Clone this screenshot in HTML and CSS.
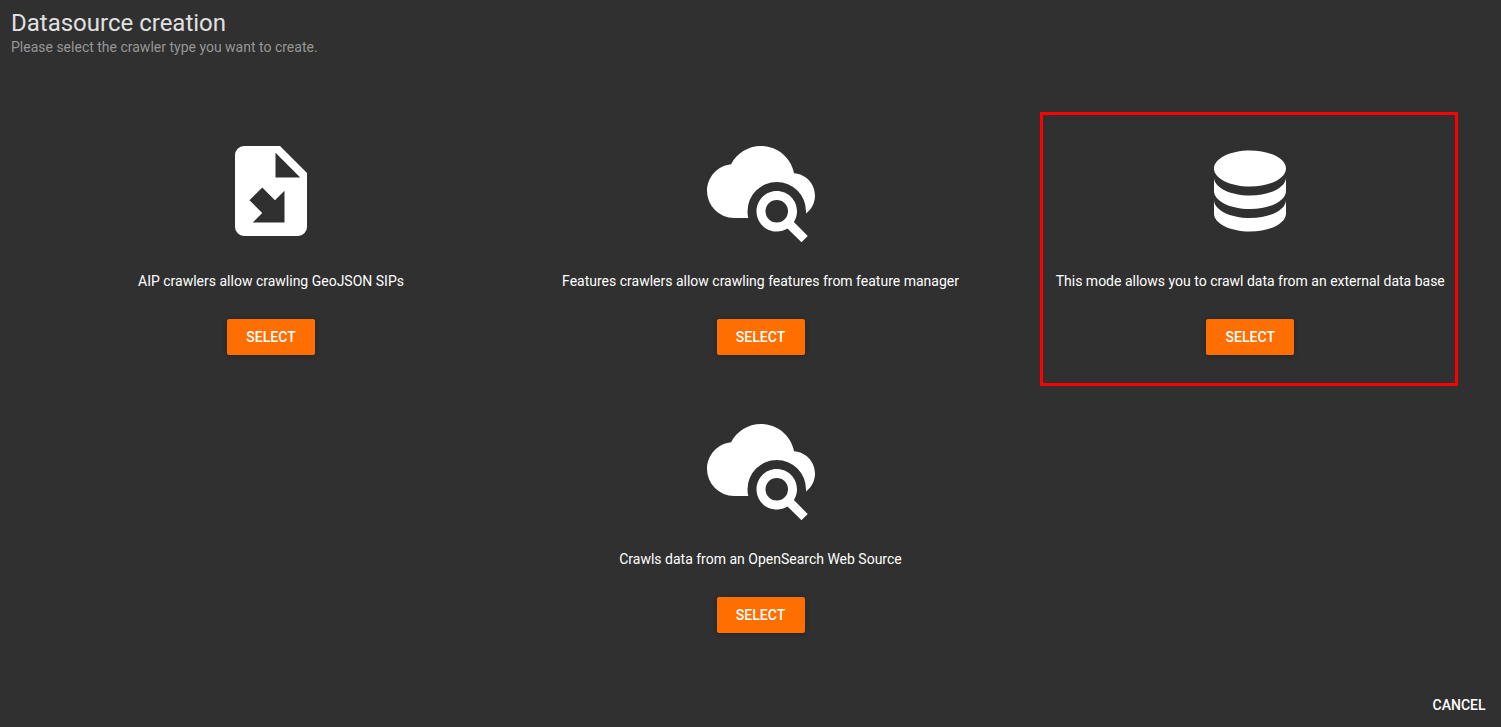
FILE: index.html
```html
<!DOCTYPE html>
<html lang="en">
<head>
<meta charset="utf-8">
<title>Datasource creation</title>
<link rel="stylesheet" href="styles.css">
</head>
<body>
<main class="card">
  <header class="header">
    <h1 class="title">Datasource creation</h1>
    <p class="subtitle">Please select the crawler type you want to create.</p>
  </header>
  <section class="grid">
    <article class="item">
      <svg class="icon" viewBox="0 0 24 24"><path d="M14 2H6a2 2 0 0 0-2 2v16a2 2 0 0 0 2 2h12a2 2 0 0 0 2-2V8l-6-6m-1 7V3.5L18.5 9H13m-2.95 2.22 2.83 2.83L15 11.93V19H7.93l2.12-2.12-2.83-2.83 2.83-2.83z"/></svg>
      <p class="label">AIP crawlers allow crawling GeoJSON SIPs</p>
      <button class="button">SELECT</button>
    </article>
    <article class="item">
      <svg class="icon" viewBox="0 0 24 24"><path d="M15.5 12C18 12 20 14 20 16.5C20 17.38 19.75 18.21 19.31 18.9L22.39 22L21 23.39L17.88 20.32C17.19 20.75 16.37 21 15.5 21C13 21 11 19 11 16.5C11 14 13 12 15.5 12M15.5 14A2.5 2.5 0 0 0 13 16.5A2.5 2.5 0 0 0 15.5 19A2.5 2.5 0 0 0 18 16.5A2.5 2.5 0 0 0 15.5 14M19.35 8.03C21.95 8.22 24 10.36 24 13C24 14.65 23.21 16.1 22 17V16.5A6.5 6.5 0 0 0 15.5 10A6.5 6.5 0 0 0 9 16.5C9 17 9.06 17.5 9.17 18H6A6 6 0 0 1 0 12C0 8.9 2.34 6.36 5.35 6.03C6.6 3.64 9.11 2 12 2C15.64 2 18.67 4.6 19.35 8.03Z"/></svg>
      <p class="label">Features crawlers allow crawling features from feature manager</p>
      <button class="button">SELECT</button>
    </article>
    <article class="item item-selected">
      <svg class="icon" viewBox="0 0 24 24"><path d="M12 3C7.58 3 4 4.79 4 7s3.58 4 8 4 8-1.79 8-4-3.58-4-8-4M4 9v3c0 2.21 3.58 4 8 4s8-1.79 8-4V9c0 2.21-3.58 4-8 4s-8-1.79-8-4m0 5v3c0 2.21 3.58 4 8 4s8-1.79 8-4v-3c0 2.21-3.58 4-8 4s-8-1.79-8-4z"/></svg>
      <p class="label">This mode allows you to crawl data from an external data base</p>
      <button class="button">SELECT</button>
    </article>
    <article class="item item-center">
      <svg class="icon" viewBox="0 0 24 24"><path d="M15.5 12C18 12 20 14 20 16.5C20 17.38 19.75 18.21 19.31 18.9L22.39 22L21 23.39L17.88 20.32C17.19 20.75 16.37 21 15.5 21C13 21 11 19 11 16.5C11 14 13 12 15.5 12M15.5 14A2.5 2.5 0 0 0 13 16.5A2.5 2.5 0 0 0 15.5 19A2.5 2.5 0 0 0 18 16.5A2.5 2.5 0 0 0 15.5 14M19.35 8.03C21.95 8.22 24 10.36 24 13C24 14.65 23.21 16.1 22 17V16.5A6.5 6.5 0 0 0 15.5 10A6.5 6.5 0 0 0 9 16.5C9 17 9.06 17.5 9.17 18H6A6 6 0 0 1 0 12C0 8.9 2.34 6.36 5.35 6.03C6.6 3.64 9.11 2 12 2C15.64 2 18.67 4.6 19.35 8.03Z"/></svg>
      <p class="label">Crawls data from an OpenSearch Web Source</p>
      <button class="button">SELECT</button>
    </article>
  </section>
  <footer class="footer"><button class="cancel">CANCEL</button></footer>
</main>
</body>
</html>
```
FILE: styles.css
```css
* { box-sizing: border-box; }
body { margin: 0; background: #303030; color: #fff; font-family: Roboto, sans-serif; }
.card { height: 727px; display: flex; flex-direction: column; }
.header { padding: 9px 11px 0; height: 107px; }
.title { margin: 0; font-size: 24px; font-weight: 400; line-height: 28px; color: #e0e0e0; }
.subtitle { margin: 2px 0 0; font-size: 14px; line-height: 16px; color: #969696; }
.grid { display: grid; grid-template-columns: repeat(3, 418px); column-gap: 71.5px; grid-auto-rows: 274px; row-gap: 4px; padding: 5px 0 0 62px; }
.item { display: flex; flex-direction: column; align-items: center; padding-top: 25px; }
.item-selected { margin: 0 1px 0 -1px; border: 3px solid red; padding: 22px 0 0 2.5px; }
.item-center { grid-column: 2; }
.icon { width: 108px; height: 108px; fill: #fff; }
.label { margin: 28px 0 0; font-size: 14px; line-height: 16px; white-space: nowrap; }
.button { margin-top: 30px; width: 88px; height: 36px; border: 0; border-radius: 2px; background: #ff6e00; color: #fff; font: 500 14px Roboto, sans-serif; box-shadow: 0 1px 6px rgba(0,0,0,.12), 0 1px 4px rgba(0,0,0,.12); }
.footer { margin-top: auto; padding: 0 15.5px 10px; text-align: right; line-height: 0; }
.cancel { border: 0; padding: 0; background: none; color: #fff; font: 500 14px/24px Roboto, sans-serif; }
```
